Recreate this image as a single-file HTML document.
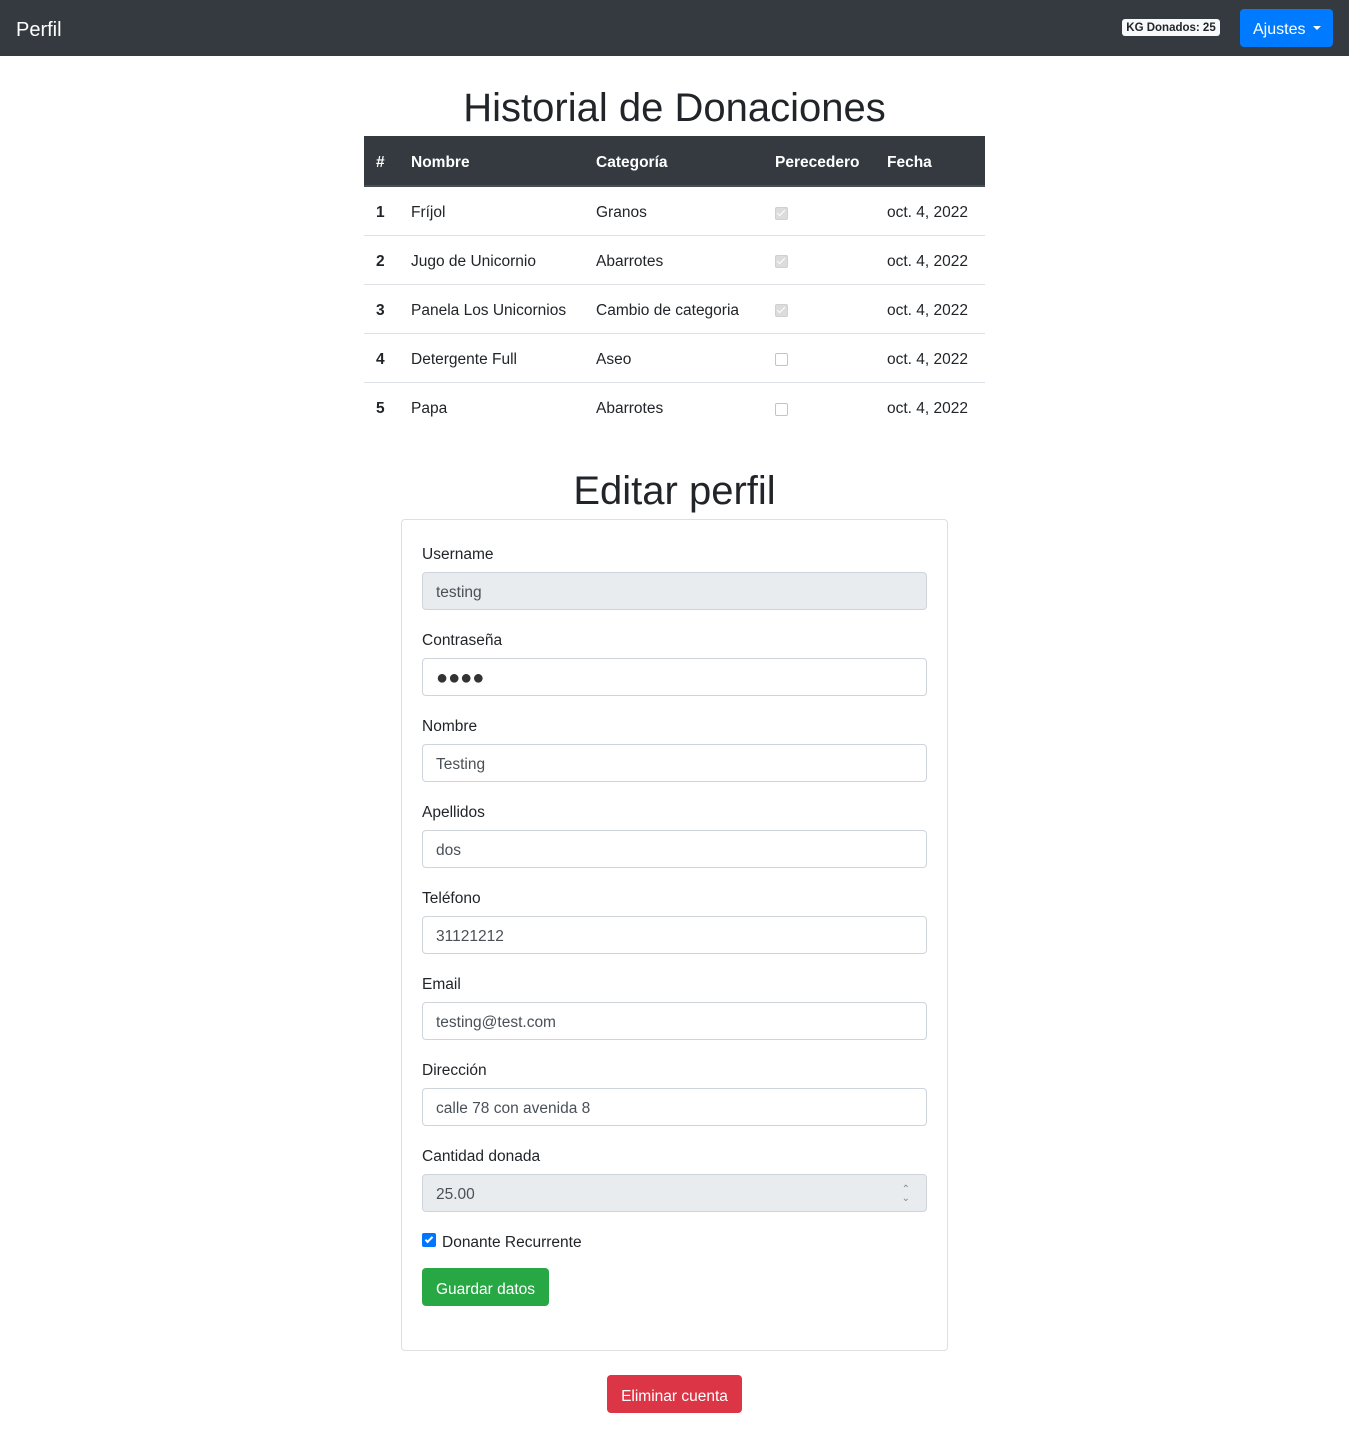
<!DOCTYPE html>
<html><head><meta charset="utf-8"><style>
*{box-sizing:border-box;margin:0;padding:0}
body{width:1349px;height:1437px;position:relative;background:#fff;font-family:"Liberation Sans",sans-serif;color:#212529;font-size:16px;overflow:hidden}
.nav{position:absolute;left:0;top:0;width:1349px;height:56px;background:#343a40}
.brand{position:absolute;left:16px;top:19px;color:#fff;font-size:20px}
.badge{position:absolute;left:1122px;top:19px;width:98px;height:17px;background:#f8f9fa;border-radius:3px;font-size:11.5px;font-weight:bold;text-align:center;line-height:19px;color:#212529}
.aj{position:absolute;left:1240px;top:9px;width:93px;height:38px;background:#007bff;border-radius:4px;color:#fff;font-size:16px;line-height:42px;padding-left:13px}
.aj:after{content:"";position:absolute;left:73px;top:17px;border-left:4.5px solid transparent;border-right:4.5px solid transparent;border-top:4.5px solid #fff}
h1{position:absolute;left:0;width:1349px;text-align:center;font-weight:normal;font-size:40px}
table{position:absolute;left:364px;top:136px;width:621px;border-collapse:collapse}
th{background:#343a40;color:#fff;text-align:left;height:50px;border-bottom:2px solid #454d55;padding:5px 12px 0;font-size:15.5px}
td{height:49px;border-top:1px solid #dee2e6;padding:5px 12px 0;font-size:15.5px}
tr:first-child td{border-top:none}
.cb{display:inline-block;width:13px;height:13px;border:1.5px solid #c4c4c4;border-radius:2px;vertical-align:middle;background:#fff;position:relative}
.cb.on{background:#dcdcdc;border-color:#d0d0d0}
.cb.on:after{content:"";position:absolute;left:3px;top:0px;width:3px;height:7px;border:solid #fff;border-width:0 1.5px 1.5px 0;transform:rotate(45deg)}
.card{position:absolute;left:401px;top:519px;width:547px;height:832px;border:1px solid #dfdfdf;border-radius:4px}
.lbl{position:absolute;left:422px;font-size:15.5px}
.inp{position:absolute;left:422px;width:505px;height:38px;border:1px solid #ced4da;border-radius:4px;padding-left:13px;padding-top:3px;line-height:33px;color:#495057;font-size:15.5px}
.ro{background:#e9ecef}
.btn{position:absolute;height:38px;border-radius:4px;color:#fff;line-height:43px;text-align:center;font-size:15.5px}
</style></head><body>
<div class="nav"><div class="brand">Perfil</div><div class="badge">KG Donados: 25</div><div class="aj">Ajustes</div></div>
<h1 style="top:86px">Historial de Donaciones</h1>
<table>
<tr><th style="width:35px">#</th><th style="width:185px">Nombre</th><th style="width:179px">Categoría</th><th style="width:112px">Perecedero</th><th>Fecha</th></tr>
<tr><td><b>1</b></td><td>Fríjol</td><td>Granos</td><td><span class="cb on"></span></td><td>oct. 4, 2022</td></tr>
<tr><td><b>2</b></td><td>Jugo de Unicornio</td><td>Abarrotes</td><td><span class="cb on"></span></td><td>oct. 4, 2022</td></tr>
<tr><td><b>3</b></td><td>Panela Los Unicornios</td><td>Cambio de categoria</td><td><span class="cb on"></span></td><td>oct. 4, 2022</td></tr>
<tr><td><b>4</b></td><td>Detergente Full</td><td>Aseo</td><td><span class="cb"></span></td><td>oct. 4, 2022</td></tr>
<tr><td><b>5</b></td><td>Papa</td><td>Abarrotes</td><td><span class="cb"></span></td><td>oct. 4, 2022</td></tr>
</table>
<h1 style="top:469px">Editar perfil</h1>
<div class="card"></div>
<div class="lbl" style="top:546px">Username</div><div class="inp ro" style="top:572px">testing</div>
<div class="lbl" style="top:632px">Contraseña</div><div class="inp" style="top:658px;font-size:20px;color:#333">●●●●</div>
<div class="lbl" style="top:718px">Nombre</div><div class="inp" style="top:744px">Testing</div>
<div class="lbl" style="top:804px">Apellidos</div><div class="inp" style="top:830px">dos</div>
<div class="lbl" style="top:890px">Teléfono</div><div class="inp" style="top:916px">31121212</div>
<div class="lbl" style="top:976px">Email</div><div class="inp" style="top:1002px">testing@test.com</div>
<div class="lbl" style="top:1062px">Dirección</div><div class="inp" style="top:1088px">calle 78 con avenida 8</div>
<div class="lbl" style="top:1148px">Cantidad donada</div><div class="inp ro" style="top:1174px">25.00<span style="position:absolute;right:16px;top:0;font-size:10px;color:#888;line-height:9px;padding-top:10px;text-align:center">⌃<br>⌄</span></div>
<div style="position:absolute;left:422px;top:1233px;width:14px;height:14px;background:#0075ff;border-radius:2px"><div style="position:absolute;left:4.5px;top:1.5px;width:4px;height:8px;border:solid #fff;border-width:0 2px 2px 0;transform:rotate(45deg)"></div></div>
<div class="lbl" style="left:442px;top:1234px">Donante Recurrente</div>
<div class="btn" style="left:422px;top:1268px;width:127px;background:#28a745">Guardar datos</div>
<div class="btn" style="left:607px;top:1375px;width:135px;background:#dc3545">Eliminar cuenta</div>
</body></html>
